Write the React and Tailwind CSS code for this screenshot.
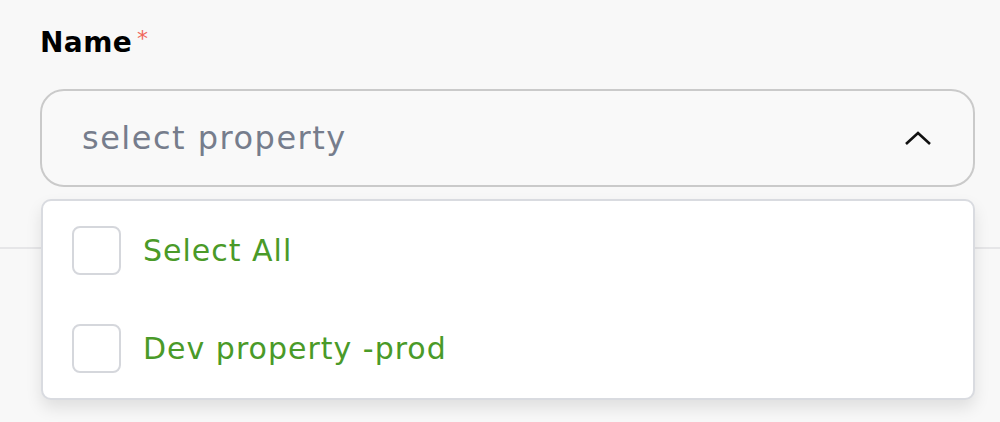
export default function App() {
  const font = { fontFamily: "'DejaVu Sans', 'Noto Sans', sans-serif" };
  return (
    <div className="w-[1000px] h-[422px] bg-[#f8f8f8] overflow-hidden" style={font}>
      <div className="relative">
        <div className="pl-[40px] pr-[25px] pt-[25px]">
          <div className="flex items-start gap-[5px]">
            <span className="text-[28px] font-bold text-black leading-[36px] tracking-[0.4px]">Name</span>
            <span className="text-[22px] text-[#f0675a] leading-[24px] mt-[2px]">*</span>
          </div>
          <div className="mt-[28px] h-[98px] rounded-[24px] border-2 border-[#cacaca] bg-[#f9f9f9] flex items-center justify-between pl-[40px] pr-[41px]">
            <span className="text-[32px] text-[#767d8c] tracking-[1.5px]">select property</span>
            <svg width="28" height="16" viewBox="0 0 28 16" fill="none">
              <polyline points="2,14 14,3 26,14" stroke="#111" strokeWidth="2.6" />
            </svg>
          </div>
        </div>
        <div className="mt-[60px] border-b-2 border-[#e6e6e8]" />
        <div className="absolute left-[41px] top-[199px] w-[934px] h-[201px] bg-white border-2 border-[#d9dbe0] rounded-[10px] shadow-[0_8px_16px_rgba(0,0,0,0.1)] flex flex-col">
          {["Select All", "Dev property -prod"].map((t) => (
            <div key={t} className="h-[99px] flex items-center pl-[29px] gap-[22px]">
              <div className="w-[49px] h-[49px] rounded-[8px] border-2 border-[#d5d7dc] bg-white" />
              <span className="text-[30px] text-[#4a9a28] tracking-[1px]">{t}</span>
            </div>
          ))}
        </div>
      </div>
    </div>
  );
}
